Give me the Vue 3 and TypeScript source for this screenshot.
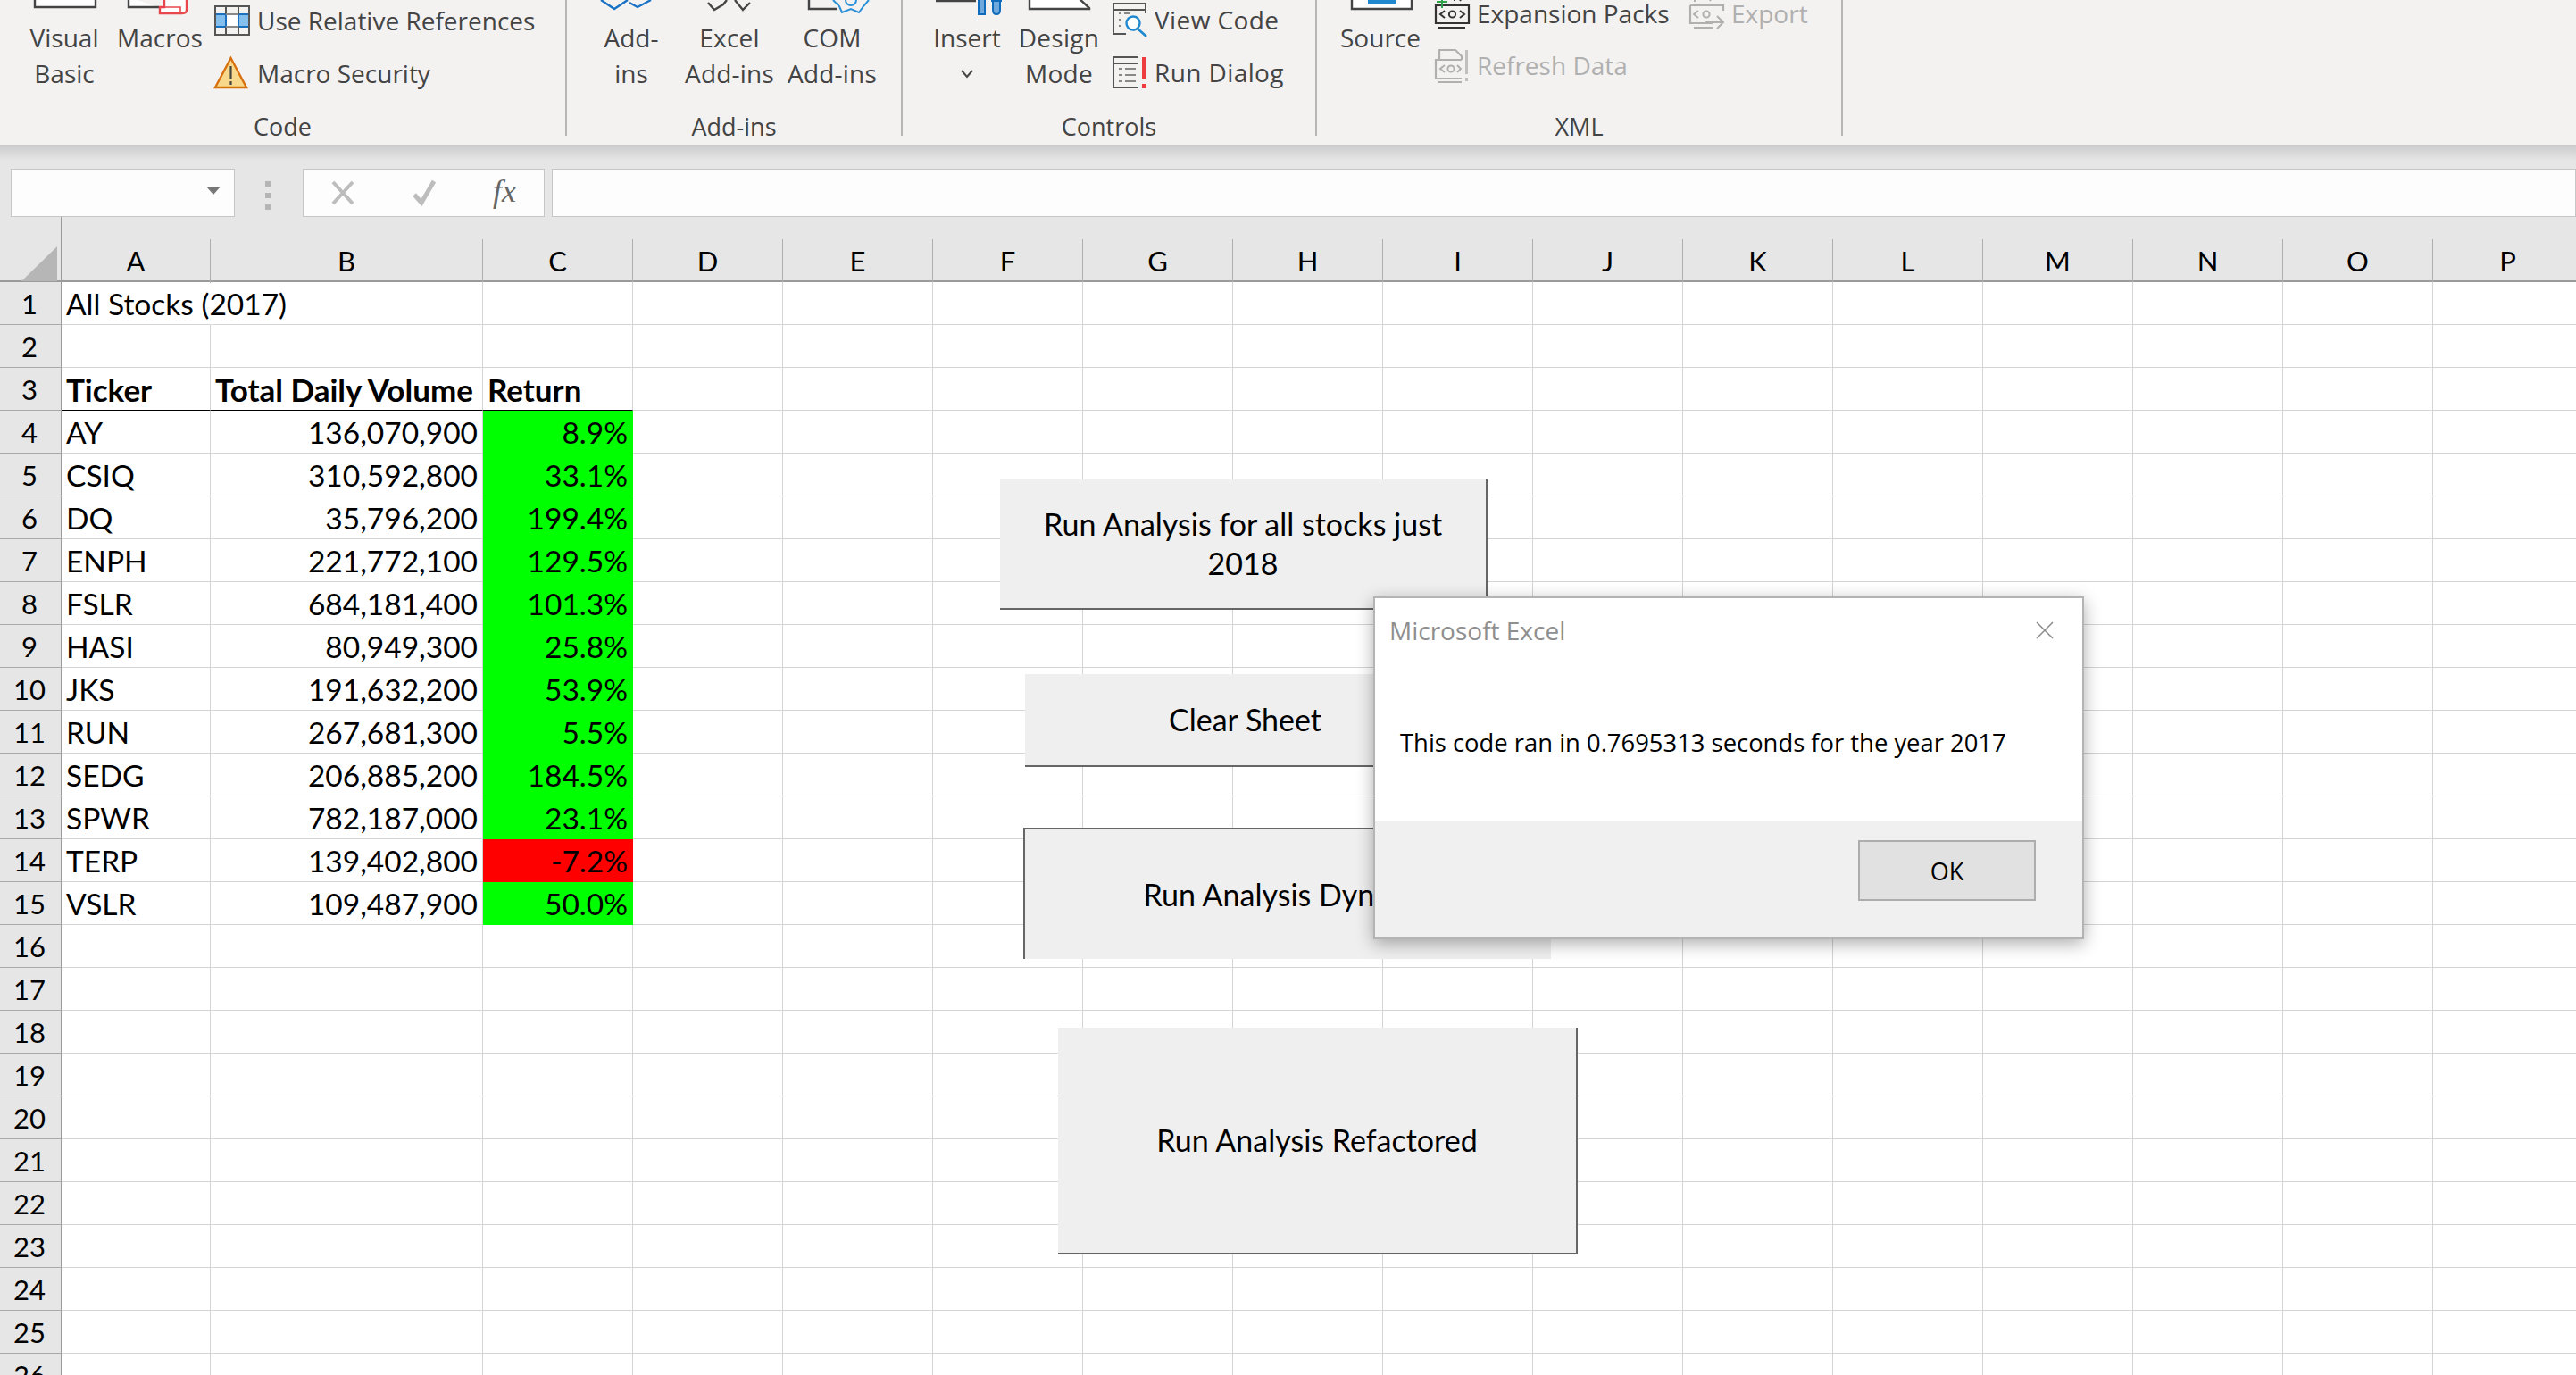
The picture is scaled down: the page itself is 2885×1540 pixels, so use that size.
<script setup lang="ts">
interface StockRow {
  ticker: string
  volume: string
  ret: string
  negative?: boolean
}

const columns = 'ABCDEFGHIJKLMNOP'.split('')
const rowNumbers = Array.from({ length: 26 }, (_, i) => i + 1)

const stocks: StockRow[] = [
  { ticker: 'AY', volume: '136,070,900', ret: '8.9%' },
  { ticker: 'CSIQ', volume: '310,592,800', ret: '33.1%' },
  { ticker: 'DQ', volume: '35,796,200', ret: '199.4%' },
  { ticker: 'ENPH', volume: '221,772,100', ret: '129.5%' },
  { ticker: 'FSLR', volume: '684,181,400', ret: '101.3%' },
  { ticker: 'HASI', volume: '80,949,300', ret: '25.8%' },
  { ticker: 'JKS', volume: '191,632,200', ret: '53.9%' },
  { ticker: 'RUN', volume: '267,681,300', ret: '5.5%' },
  { ticker: 'SEDG', volume: '206,885,200', ret: '184.5%' },
  { ticker: 'SPWR', volume: '782,187,000', ret: '23.1%' },
  { ticker: 'TERP', volume: '139,402,800', ret: '-7.2%', negative: true },
  { ticker: 'VSLR', volume: '109,487,900', ret: '50.0%' }
]

// contents of columns A, B, C for a given sheet row
function cellsFor(row: number): string[] {
  if (row === 1) return ['All Stocks (2017)', '', '']
  if (row === 3) return ['Ticker', 'Total Daily Volume', 'Return']
  const stock = stocks[row - 4]
  return stock ? [stock.ticker, stock.volume, stock.ret] : ['', '', '']
}

function cellClass(row: number, col: number) {
  const stock = stocks[row - 4]
  return {
    'cell--noline': row === 1 && col === 0,
    'cell--head': row === 3 && col < 3,
    'cell--num': !!stock && col > 0 && col < 3,
    'cell--up': !!stock && col === 2 && !stock.negative,
    'cell--down': !!stock && col === 2 && !!stock.negative
  }
}

function textFor(row: number, col: number): string {
  return col < 3 ? cellsFor(row)[col] : ''
}
</script>

<template>
  <div class="app">
    <header class="ribbon">
      <section class="group group--code">
        <div class="group-body">
          <div class="big big--vb">
            <svg class="big-icon" viewBox="21 0 100 24" width="100" height="24"><path d="M38 -3V8H106V-3" fill="#fff" stroke="#444" stroke-width="2.4"/></svg>
            <span>Visual</span><span>Basic</span>
          </div>
          <div class="big big--macros">
            <svg class="big-icon" viewBox="124 0 110 24" width="110" height="24">
              <path d="M144 -3V8H178" fill="#fff" stroke="#444" stroke-width="2.4"/>
              <path d="M184 -3V8H179V15H204Q209 15 209 11V-3" fill="#fff" stroke="#e8474c" stroke-width="2.4"/>
              <path d="M181 8H202V14" fill="none" stroke="#e8474c" stroke-width="1.6"/>
            </svg>
            <span>Macros</span>
          </div>
          <div class="small-col small-col--code">
            <div class="small">
              <svg class="small-icon" viewBox="240 3 40 36" width="40" height="36">
                <path d="M241 14H279V28H241Z" fill="#fff"/>
                <path d="M241 14H253V28H241ZM267 14H279V28H267Z" fill="#83beec" stroke="#1a6fbf" stroke-width="2"/>
                <path d="M241 5H279V37H241ZM253 5V14M267 5V14M253 28V37M267 28V37" fill="none" stroke="#555" stroke-width="2"/>
                <path d="M253 14H267M253 28H267" stroke="#888" stroke-width="2"/>
              </svg>
              <span>Use Relative References</span>
            </div>
            <div class="small">
              <svg class="small-icon" viewBox="240 62 40 38" width="40" height="38">
                <path d="M258.500 64L276 97H241Z" fill="#f8d98c" stroke="#d9700f" stroke-width="2.4"/>
                <path d="M258.500 73V88M258.500 90V94" stroke="#444" stroke-width="2.2"/>
              </svg>
              <span>Macro Security</span>
            </div>
          </div>
        </div>
        <div class="group-label">Code</div>
      </section>

      <section class="group group--addins">
        <div class="group-body">
          <div class="big big--addin">
            <svg class="big-icon" viewBox="656 0 100 24" width="100" height="24"><path d="M672 0L687 10L702 0M704 3L713 8L728 0" fill="none" stroke="#1a72c4" stroke-width="2.4"/></svg>
            <span>Add-</span><span>ins</span>
          </div>
          <div class="big big--excel">
            <svg class="big-icon" viewBox="757 0 120 24" width="120" height="24"><path d="M793 3L800 11L810 5L814 0M823 0L827 5L832 11L840 3" fill="none" stroke="#444" stroke-width="2.4"/></svg>
            <span>Excel</span><span>Add-ins</span>
          </div>
          <div class="big big--com">
            <svg class="big-icon" viewBox="877 0 110 24" width="110" height="24">
              <path d="M906 -3V10H937" fill="none" stroke="#444" stroke-width="2.4"/>
              <path d="M933 0L940 7L943 14L953 10L962 14L967 7L973 0" fill="none" stroke="#2a90d8" stroke-width="2"/>
              <path d="M947 0A6 6 0 0 0 959 0" fill="none" stroke="#2a90d8" stroke-width="2"/>
            </svg>
            <span>COM</span><span>Add-ins</span>
          </div>
        </div>
        <div class="group-label">Add-ins</div>
      </section>

      <section class="group group--controls">
        <div class="group-body">
          <div class="big big--insert">
            <svg class="big-icon" viewBox="1038 0 90 24" width="90" height="24">
              <path d="M1048 1H1093" stroke="#444" stroke-width="2.4"/>
              <path d="M1096 -2H1103V16H1096Z" fill="#6fa9dc" stroke="#0f6cbd" stroke-width="2"/>
              <path d="M1112 -2V11Q1112 16 1116 16Q1120 16 1120 11V-2M1110 1H1122" fill="#6fa9dc" stroke="#0f6cbd" stroke-width="2"/>
            </svg>
            <span>Insert</span>
            <svg class="chevron" viewBox="0 0 16 10" width="16" height="10"><path d="M2 1L8 8L14 1" fill="none" stroke="#444" stroke-width="2"/></svg>
          </div>
          <div class="big big--design">
            <svg class="big-icon" viewBox="1137 0 100 24" width="100" height="24">
              <path d="M1154 -3V10H1221V9L1208 -3" fill="#fff" stroke="#444" stroke-width="2.4"/>
            </svg>
            <span>Design</span><span>Mode</span>
          </div>
          <div class="small-col small-col--controls">
            <div class="small small--tight">
              <svg class="small-icon" viewBox="1247 0 40 42" width="40" height="42">
                <path d="M1262 37H1248V3H1284V14M1248 10H1284" fill="none" stroke="#555" stroke-width="2"/>
                <path d="M1254 14h3M1254 21h3M1254 28h3M1260 14h6" stroke="#888" stroke-width="2"/>
                <circle cx="1270" cy="25" r="7.500" fill="#fff" stroke="#1f88cf" stroke-width="2.400"/>
                <path d="M1275 31L1285 40" stroke="#1f88cf" stroke-width="2.600"/>
              </svg>
              <span>View Code</span>
            </div>
            <div class="small small--tight">
              <svg class="small-icon" viewBox="1247 60 40 40" width="40" height="40">
                <path d="M1276 63H1248V97H1276M1248 70H1276" fill="none" stroke="#555" stroke-width="2"/>
                <path d="M1254 76h4M1261 76h12M1254 83h4M1261 83h12M1254 90h4M1261 90h12" stroke="#888" stroke-width="2"/>
                <path d="M1280 63h5v25h-5ZM1280 93h5v5h-5Z" fill="#ee3b3f"/>
              </svg>
              <span>Run Dialog</span>
            </div>
          </div>
        </div>
        <div class="group-label">Controls</div>
      </section>

      <section class="group group--xml">
        <div class="group-body">
          <div class="big big--source">
            <svg class="big-icon" viewBox="1486 0 120 24" width="120" height="24">
              <path d="M1514 -3V10H1581V-3" fill="#fff" stroke="#444" stroke-width="2.4"/>
              <path d="M1532 0h32v5h-32Z" fill="#1f88cf"/>
            </svg>
            <span>Source</span>
          </div>
          <div class="small-col small-col--xml">
            <div class="small">
              <svg class="small-icon" viewBox="1606 -3 40 40" width="40" height="40">
                <path d="M1608 8H1645V28H1608ZM1611 33H1641" fill="none" stroke="#333" stroke-width="2.200"/>
                <path d="M1618 14L1613 18L1618 22M1635 14L1640 18L1635 22" fill="none" stroke="#333" stroke-width="2"/>
                <circle cx="1626.500" cy="18" r="3.600" fill="none" stroke="#333" stroke-width="2"/>
                <path d="M1615 0V11M1609 4H1621" stroke="#2ca24c" stroke-width="2"/>
                <path d="M1629 -2V3M1633 -2L1636 3" stroke="#333" stroke-width="2"/>
              </svg>
              <span>Expansion Packs</span>
            </div>
            <div class="small small--off">
              <svg class="small-icon" viewBox="1606 50 40 40" width="40" height="40">
                <path d="M1612 64V53H1630L1637 60V64M1637 64H1608V85H1637M1611 89H1637" fill="none" stroke="#b0b0b0" stroke-width="2.200"/>
                <path d="M1618 70L1613 74L1618 78M1632 70L1636 74L1632 78" fill="none" stroke="#b0b0b0" stroke-width="2"/>
                <circle cx="1625" cy="74" r="3.600" fill="none" stroke="#b0b0b0" stroke-width="2"/>
                <path d="M1641 53h3v27h-3ZM1641 84h3v4h-3Z" fill="#c0c0c0"/>
              </svg>
              <span>Refresh Data</span>
            </div>
          </div>
          <div class="small-col small-col--xml">
            <div class="small small--off">
              <svg class="small-icon" viewBox="1891 -3 40 40" width="40" height="40">
                <path d="M1893 8H1930V14M1918 28H1893V8M1897 33H1919" fill="none" stroke="#b0b0b0" stroke-width="2.200"/>
                <path d="M1902 14L1897 18L1902 22" fill="none" stroke="#b0b0b0" stroke-width="2"/>
                <circle cx="1911" cy="18" r="3.600" fill="none" stroke="#b0b0b0" stroke-width="2"/>
                <path d="M1910 27H1930M1923 20L1930 27L1923 34M1898 0V4M1912 -2L1916 3" fill="none" stroke="#b0b0b0" stroke-width="2"/>
              </svg>
              <span>Export</span>
            </div>
          </div>
        </div>
        <div class="group-label">XML</div>
      </section>
    </header>

    <div class="formula">
      <div class="name-box">
        <i class="name-caret"></i>
      </div>
      <div class="grip"><i></i><i></i><i></i></div>
      <div class="fx-box">
        <svg viewBox="0 0 30 30" width="30" height="30"><path d="M3 3L25 27M25 3L3 27" stroke="#bdbdbd" stroke-width="4"/></svg>
        <svg viewBox="0 0 30 30" width="30" height="30"><path d="M4 17L12 26L26 2" fill="none" stroke="#bdbdbd" stroke-width="5"/></svg>
        <span class="fx">fx</span>
      </div>
      <div class="formula-input"></div>
    </div>

    <main class="sheet">
      <div class="col-heads">
        <div class="corner"><i class="corner-mark"></i></div>
        <div v-for="c in columns" :key="c" class="col-head">{{ c }}</div>
      </div>
      <div v-for="r in rowNumbers" :key="r" class="row">
        <div class="row-head">{{ r }}</div>
        <div
          v-for="(c, i) in columns"
          :key="c"
          class="cell"
          :class="cellClass(r, i)"
        >{{ textFor(r, i) }}</div>
      </div>
    </main>

    <button class="macro macro--all">Run Analysis for all stocks just 2018</button>
    <button class="macro macro--clear">Clear Sheet</button>
    <button class="macro macro--dyn">Run Analysis Dynamic</button>
    <button class="macro macro--refactored">Run Analysis Refactored</button>

    <div class="dialog">
      <div class="dialog-head">
        <span>Microsoft Excel</span>
        <svg viewBox="0 0 20 20" width="20" height="20"><path d="M1 1L19 19M19 1L1 19" stroke="#8a8a8a" stroke-width="1.500"/></svg>
      </div>
      <div class="dialog-body">This code ran in 0.7695313 seconds for the year 2017</div>
      <div class="dialog-foot">
        <button class="ok">OK</button>
      </div>
    </div>
  </div>
</template>

<style>
html,
body {
  margin: 0;
  background: #fff;
}
</style>

<style scoped>
.app {
  position: relative;
  width: 2885px;
  height: 1540px;
  overflow: hidden;
  background: #fff;
  font-family: "Lato", "Liberation Sans", sans-serif;
}

/* ribbon */
.ribbon {
  display: flex;
  height: 162px;
  background: #f3f2f1;
  color: #444;
  font-family: "Open Sans", "Noto Sans", sans-serif;
  font-size: 28px;
}
.group {
  display: flex;
  flex-direction: column;
  box-sizing: border-box;
  height: 152px;
  border-right: 2px solid #b8b6b4;
}
.group--code { width: 635px; padding-left: 21px; }
.group--addins { width: 376px; padding-left: 20px; }
.group--controls { width: 464px; padding-left: 26px; }
.group--xml { width: 589px; padding-left: 10px; }
.group-body {
  display: flex;
  flex: 1;
  min-height: 0;
}
.group-label {
  height: 40px;
  margin-top: -8px;
  padding-top: 10px;
  text-align: center;
  line-height: 40px;
  font-size: 27px;
  box-sizing: border-box;
}
.group--code .group-label { padding-right: 21px; }
.group--addins .group-label { padding-right: 20px; }
.group--controls .group-label { padding-right: 26px; }
.group--xml .group-label { padding-right: 10px; }
.big {
  display: flex;
  flex-direction: column;
  align-items: center;
  line-height: 40px;
  white-space: nowrap;
}
.big-icon {
  display: block;
  flex: none;
  margin-bottom: -2px;
  overflow: visible;
}
.big--vb { width: 100px; padding-left: 1px; }
.big--macros { width: 110px; margin-left: 2px; }
.big--addin { width: 100px; padding-left: 2px; }
.big--excel { width: 120px; margin-left: -1px; padding-left: 1px; letter-spacing: 0.2px; }
.big--com { width: 110px; letter-spacing: 0.2px; }
.big--insert { width: 90px; padding-left: 1px; }
.big--design { width: 100px; margin-left: 8px; letter-spacing: 0.3px; }
.big--source { width: 120px; flex: none; padding-left: 1px; }
.chevron {
  margin-top: 16px;
}
.small-col {
  display: flex;
  flex-direction: column;
}
.small-col--code { margin-left: 6px; padding-top: 3px; gap: 19px; }
.small-col--controls { margin-left: 10px; padding-top: 2px; gap: 19px; }
.small-col--xml { flex: none; width: 285px; gap: 18px; margin-top: -5px; }
.small {
  display: flex;
  align-items: center;
  height: 40px;
  white-space: nowrap;
}
.small-icon {
  flex: none;
  margin-right: 8px;
  overflow: visible;
}
.small--tight { letter-spacing: 0.4px; }
.small--tight .small-icon { margin-right: 7px; }
.small--off { color: #b0b0b0; }

/* formula bar */
.formula {
  display: flex;
  align-items: flex-start;
  box-sizing: border-box;
  height: 81px;
  padding: 27px 0 0 12px;
  background: linear-gradient(#cbcbcb, #e6e6e6 18px);
}
.name-box,
.fx-box,
.formula-input {
  box-sizing: border-box;
  height: 54px;
  border: 1.500px solid #c6c6c6;
  background: #fdfdfd;
}
.name-box {
  display: flex;
  align-items: center;
  justify-content: flex-end;
  width: 251px;
  padding-right: 15px;
}
.name-caret {
  width: 0;
  height: 0;
  margin-top: -6px;
  border-left: 8px solid transparent;
  border-right: 8px solid transparent;
  border-top: 9px solid #777;
}
.grip {
  display: flex;
  flex-direction: column;
  gap: 7px;
  width: 76px;
  margin-top: 14px;
  padding-left: 34px;
  box-sizing: border-box;
}
.grip i {
  width: 6px;
  height: 6px;
  background: #b5b5b5;
}
.fx-box {
  display: grid;
  grid-template-columns: repeat(3, 90px);
  justify-items: center;
  align-items: center;
  width: 271px;
}
.fx {
  font-family: "Liberation Serif", serif;
  font-style: italic;
  font-size: 36px;
  color: #666;
  margin-top: -4px;
}
.formula-input {
  flex: 1;
  margin-left: 8px;
}

/* grid */
.col-heads,
.row {
  display: grid;
  grid-template-columns: 69px 167px 305px repeat(14, 168px);
}
.col-heads {
  box-sizing: border-box;
  height: 73px;
  padding-top: 25px;
  background: #e6e6e6;
  border-bottom: 2px solid #9b9b9b;
  color: #000;
}
.corner {
  position: relative;
  border-right: 1px solid #9b9b9b;
  margin-top: -25px;
}
.corner-mark {
  position: absolute;
  left: 24px;
  bottom: 2px;
  width: 40px;
  height: 39px;
  background: #b6b6b6;
  clip-path: polygon(100% 0, 100% 100%, 0 100%);
}
.col-head {
  border-right: 1px solid #b0b0b0;
  text-align: center;
  font-size: 31px;
  line-height: 49px;
}
.row {
  height: 48px;
}
.row-head {
  box-sizing: border-box;
  padding: 1px 2px 0 0;
  background: #e6e6e6;
  border-right: 1px solid #9b9b9b;
  border-bottom: 1px solid #a8a8a8;
  text-align: center;
  font-size: 31px;
  line-height: 46px;
  color: #000;
}
.cell {
  box-sizing: border-box;
  padding: 1px 5px 0 5px;
  border-right: 1px solid #d4d4d4;
  border-bottom: 1px solid #d4d4d4;
  font-size: 33.500px;
  line-height: 46px;
  color: #000;
  white-space: nowrap;
}
.cell--noline {
  border-right-color: transparent;
}
.cell--head {
  font-size: 35px;
  font-weight: 700;
  border-bottom-color: #000;
}
.cell--num {
  text-align: right;
}
.cell--up {
  background: #00ff00;
  border-color: #00ff00;
}
.cell--down {
  background: #ff0000;
  border-color: #ff0000;
}

/* shapes sitting on the sheet */
.macro {
  position: absolute;
  box-sizing: border-box;
  margin: 0;
  padding: 0 20px;
  border: 0 solid #666;
  background: #efefef;
  color: #000;
  font-family: "Lato", "Liberation Sans", sans-serif;
  font-size: 34px;
  line-height: 44px;
}
.macro--all {
  left: 1120px;
  top: 537px;
  width: 546px;
  height: 146px;
  border-right-width: 2px;
  border-bottom-width: 2px;
}
.macro--clear {
  left: 1148px;
  top: 755px;
  width: 493px;
  height: 104px;
  border-bottom-width: 2px;
}
.macro--dyn {
  left: 1146px;
  top: 927px;
  width: 591px;
  height: 147px;
  padding-left: 24px;
  border-top-width: 2px;
  border-left-width: 2px;
}
.macro--refactored {
  left: 1185px;
  top: 1151px;
  width: 582px;
  height: 254px;
  border-right-width: 2px;
  border-bottom-width: 2px;
}

.dialog {
  position: absolute;
  left: 1538px;
  top: 668px;
  display: flex;
  flex-direction: column;
  box-sizing: border-box;
  width: 796px;
  height: 384px;
  border: 2px solid #b4b4b4;
  background: #fff;
  box-shadow: 0 5px 18px rgba(0, 0, 0, 0.32);
  font-family: "Open Sans", "Noto Sans", sans-serif;
}
.dialog-head {
  display: flex;
  align-items: center;
  justify-content: space-between;
  box-sizing: border-box;
  height: 72px;
  padding: 0 32px 0 16px;
  color: #8f8f8f;
  font-size: 28px;
}
.dialog-body {
  display: flex;
  align-items: center;
  height: 178px;
  padding-left: 28px;
  color: #000;
  font-size: 27.400px;
  white-space: nowrap;
}
.dialog-foot {
  display: flex;
  justify-content: flex-end;
  flex: 1;
  padding: 21px 52px 0 0;
  background: #f0f0f0;
}
.ok {
  box-sizing: border-box;
  width: 199px;
  height: 68px;
  margin: 0;
  border: 2px solid #adadad;
  background: #e1e1e1;
  color: #000;
  font-family: "Open Sans", "Noto Sans", sans-serif;
  font-size: 27px;
}
</style>
